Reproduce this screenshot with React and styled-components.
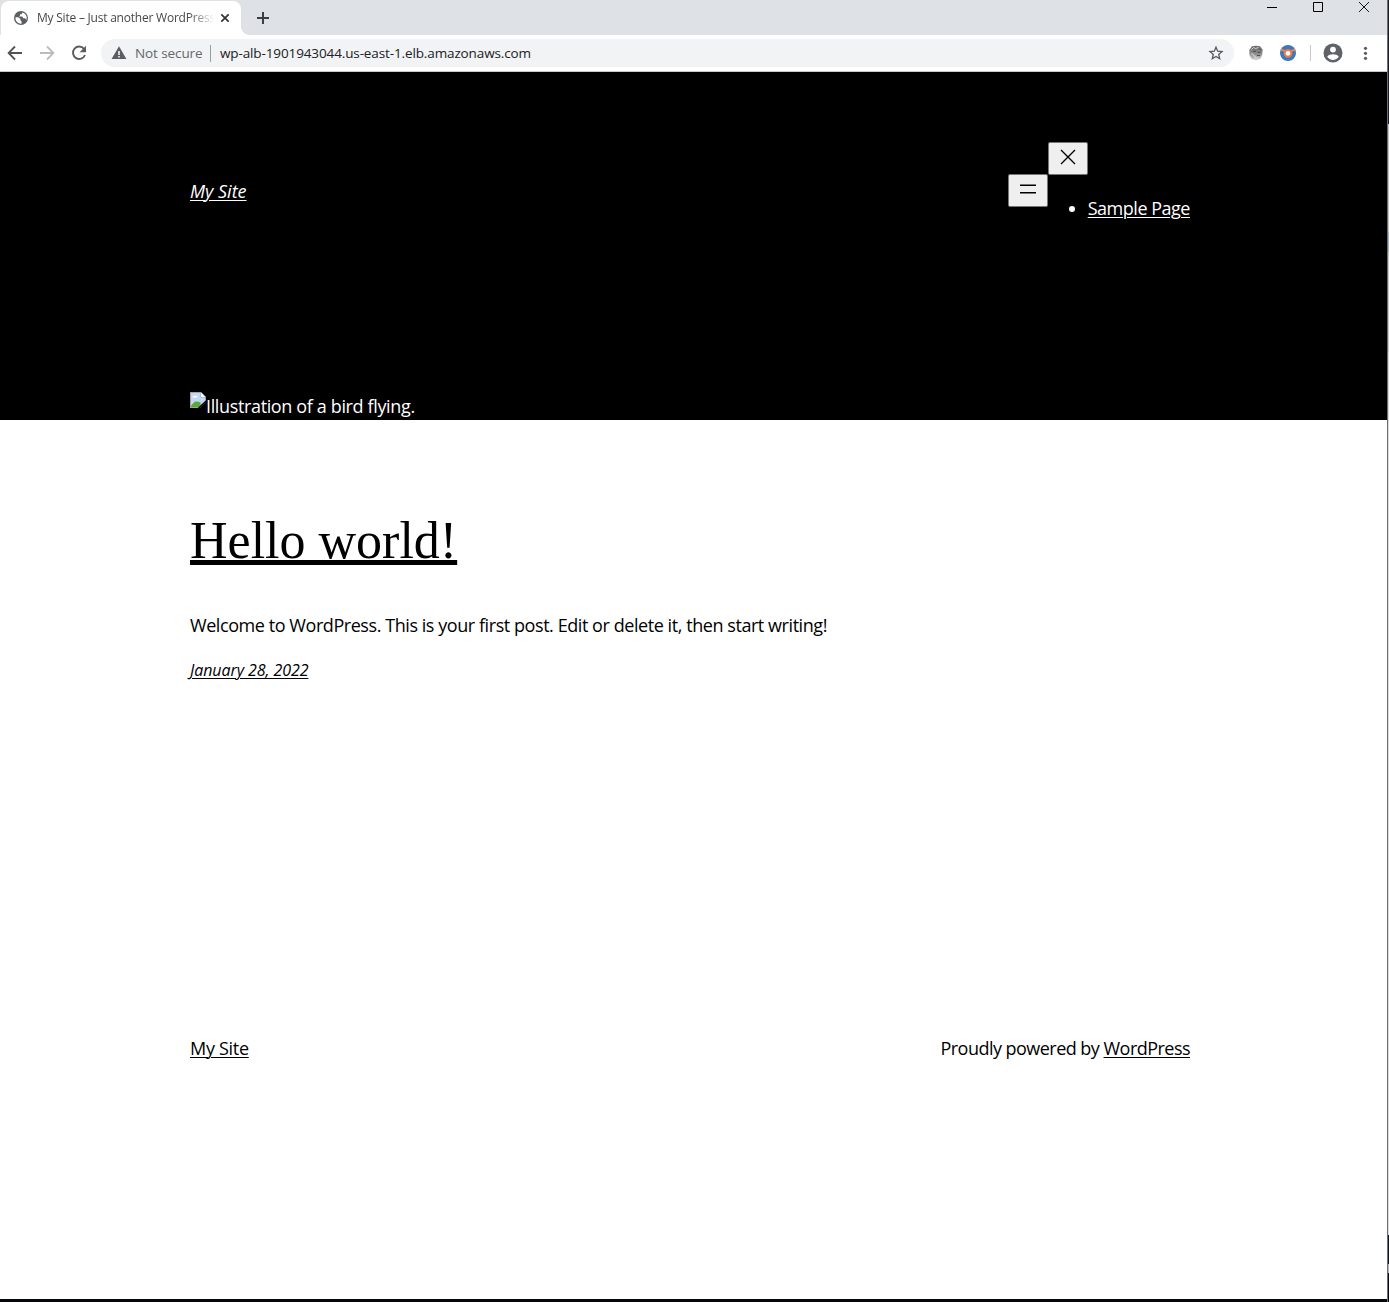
import React from 'react';
import styled, { createGlobalStyle } from 'styled-components';

const GlobalStyle = createGlobalStyle`
  * { box-sizing: border-box; }
  body { margin: 0; background: #06070d; }
  a { color: inherit; text-decoration-thickness: 1px; text-underline-offset: 2px; }
  svg { display: block; flex: none; }
`;

const Desktop = styled.div`
  display: flex;
  width: 1389px;
  height: 1302px;
  overflow: hidden;
  font-family: 'Open Sans', 'Noto Sans', sans-serif;
  background: #06070d;
`;
const Window = styled.div`
  display: flex;
  flex-direction: column;
  width: 1387px;
  height: 1299px;
  background: #fff;
`;
const Edge = styled.div`
  width: 2px;
  height: 1302px;
  border-left: 1px solid #6c6e70;
  display: flex;
  flex-direction: column;
`;
const EdgePart = styled.div`
  height: ${(p) => p.$h}px;
  background: ${(p) => p.$c};
`;
const TabStrip = styled.div`
  display: flex;
  height: 35px;
  background: #dee1e6;
  padding-left: 1px;
`;
const Tab = styled.div`
  display: flex;
  align-items: center;
  width: 240px;
  height: 34px;
  margin-top: 1px;
  padding: 0 10px 0 12px;
  border-radius: 8px 8px 0 0;
  background: #fff;
`;
const TabTitle = styled.div`
  width: 176px;
  margin-left: 8px;
  font-size: 12px;
  line-height: 16px;
  letter-spacing: -0.22px;
  color: #45484c;
  white-space: nowrap;
  overflow: hidden;
  mask-image: linear-gradient(90deg, #000 152px, transparent 178px);
`;
const TabFoot = styled.div`
  align-self: flex-end;
  width: 8px;
  height: 8px;
  background: radial-gradient(circle at 100% 0, #dee1e6 7.5px, #fff 8px);
`;
const NewTab = styled.div`
  padding: 11px 0 0 7px;
`;
const WindowControls = styled.div`
  display: flex;
  gap: 34px;
  margin-left: auto;
  padding: 1px 17px 0 0;
`;
const Toolbar = styled.div`
  display: flex;
  align-items: center;
  height: 37px;
  padding: 0 14px 0 7px;
  border-bottom: 1px solid #c8c9cb;
`;
const NavIcons = styled.div`
  display: flex;
  gap: 16px;
`;
const Omnibox = styled.div`
  display: flex;
  align-items: center;
  width: 1133px;
  height: 28px;
  margin-left: 14px;
  padding: 0 10px;
  border-radius: 14px;
  background: #f1f3f4;
`;
const Security = styled.div`
  width: 76px;
  margin-left: 8px;
  border-right: 1px solid #9a9da1;
  font-size: 13.5px;
  line-height: 17px;
  letter-spacing: -0.1px;
  white-space: nowrap;
  color: #64686d;
`;
const Url = styled.div`
  flex: 1;
  margin-left: 9px;
  font-size: 13.5px;
  line-height: 17px;
  letter-spacing: -0.12px;
  white-space: nowrap;
  color: #202124;
`;
const Actions = styled.div`
  display: flex;
  align-items: center;
  gap: 16px;
  margin-left: 14px;
`;
const Account = styled.div`
  display: flex;
  align-items: center;
  gap: 14px;
  margin-left: -2px;
`;
const Divider = styled.div`
  width: 1px;
  height: 16px;
  margin-right: -2px;
  background: #c5c7ca;
`;

const Header = styled.header`
  height: 348px;
  padding: 70px 197px 0 190px;
  background: #000;
  color: #fff;
`;
const HeaderRow = styled.div`
  display: flex;
  align-items: center;
  justify-content: space-between;
  height: 98px;
`;
const Body = styled.div`
  font-size: ${(p) => p.$size || 18}px;
  line-height: 28px;
  letter-spacing: ${(p) => p.$track || 0}px;
  font-style: ${(p) => (p.$italic ? 'italic' : 'normal')};
  white-space: nowrap;
`;
const Nav = styled.nav`
  display: flex;
  align-items: flex-start;
  height: 98px;
`;
const NavButton = styled.button`
  display: flex;
  justify-content: center;
  width: 40px;
  height: 33px;
  margin-top: ${(p) => p.$top || 0}px;
  padding: 2px 0 0;
  border: 1px solid #767676;
  border-radius: 2px;
  background: #efefef;
  color: #000;
`;
const Menu = styled.div`
  display: flex;
  flex-direction: column;
  height: 98px;
`;
const MenuList = styled.ul`
  margin: 19px 0 0;
  padding: 0 0 0 40px;
`;
const BrokenImage = styled.div`
  display: flex;
  height: 28px;
  margin-top: 152px;
`;
const Main = styled.main`
  height: 879px;
  padding: 86px 197px 0 190px;
  color: #000;
`;
const Title = styled.h2`
  margin: 0;
  font: 400 52px/70px 'Liberation Serif', serif;
  letter-spacing: 0;
  white-space: nowrap;
  a { text-decoration-thickness: 5px; text-underline-offset: 2px; }
`;
const Post = styled.div`
  display: flex;
  flex-direction: column;
  gap: 17px;
  margin-top: 35px;
`;
const Footer = styled.footer`
  display: flex;
  justify-content: space-between;
  margin-top: 350px;
`;

const Globe = () => (
  <svg width="16" height="16" viewBox="0 0 16 16">
    <circle cx="8" cy="8" r="7" fill="#5b5f64" />
    <path d="M2.4 7.3h2.8l2.2 1.4v1.6l1.2 1.2v2.1A5.7 5.7 0 0 1 2.4 7.3zM9.5 2.5 8.6 4.2H7v1.5L5.7 6.6h3.5l1.1 1.7h1.6l1.7 1.5A5.8 5.8 0 0 0 9.5 2.5z" fill="#fff" />
  </svg>
);
const CloseMark = styled.svg`
  margin-left: 7px;
`;
const TabClose = () => (
  <CloseMark width="10" height="10" viewBox="0 0 10 10" stroke="#303337" strokeWidth="1.7">
    <path d="M1.3 1.3l7.4 7.4M8.7 1.3L1.3 8.7" />
  </CloseMark>
);
const Back = ({ flip, color }) => (
  <svg width="16" height="16" viewBox="0 0 16 16" fill="none" stroke={color} strokeWidth="1.8">
    <path d={flip ? 'M1 8h13M8 1.5L14.4 8 8 14.5' : 'M15 8H2M8 1.5L1.6 8 8 14.5'} />
  </svg>
);
const Reload = () => (
  <svg width="16" height="16" viewBox="0 0 16 16">
    <path d="M13 3.8A6.2 6.2 0 1 0 14 10" fill="none" stroke="#5a5d61" strokeWidth="1.9" />
    <path d="M15 .8v6.4H8.6z" fill="#5a5d61" />
  </svg>
);
const Warning = () => (
  <svg width="16" height="16" viewBox="0 0 16 16">
    <path d="M8 1.3 15.4 14H.6z" fill="#5a5d61" />
    <path d="M8 6v4M8 11v1.6" stroke="#f1f3f4" strokeWidth="1.6" />
  </svg>
);
const Star = () => (
  <svg width="16" height="16" viewBox="0 0 16 16" fill="none" stroke="#55585c" strokeWidth="1.3">
    <path d="M8 2.2l1.7 4 4.300.400-3.300 2.900 1 4.200L8 11.400l-3.700 2.300 1-4.200L2 6.600l4.300-.400z" />
  </svg>
);
const GreyGlobe = () => (
  <svg width="16" height="16" viewBox="0 0 16 16">
    <defs>
      <linearGradient id="grey" x1="0" y1="0" x2="0" y2="1">
        <stop offset="0" stopColor="#6a6a6a" />
        <stop offset=".55" stopColor="#8b8b8b" />
        <stop offset="1" stopColor="#d6d6d6" />
      </linearGradient>
    </defs>
    <path d="M4 1.200 8 .700l4 .600 2.600 3.200-.400 5-1.700 4.300-4 1.400-5-1.300-2-4-.200-5z" fill="url(#grey)" />
    <path d="M3.500 4.500l2-2 2 1 3-1M3 9h2l1 2 2 .5M6 13h5" fill="none" stroke="#d0d0d0" />
    <path d="M5 6.300h3M9.500 7.400h3M11 3.500l2 2M9 10.500h3" stroke="#4c4c4c" />
  </svg>
);
const BlueBadge = () => (
  <svg width="16" height="16" viewBox="0 0 16 16">
    <circle cx="8" cy="8" r="8" fill="#3b78bd" />
    <path d="M.7 4.800l5 1.300M15.300 4.800l-5 1.300" stroke="#ef8350" strokeWidth="2" />
    <circle cx="8" cy="8.300" r="3.400" fill="#fff" stroke="#ef7b43" strokeWidth="2" />
  </svg>
);
const Profile = () => (
  <svg width="20" height="20" viewBox="0 0 20 20">
    <circle cx="10" cy="10" r="9.500" fill="#5f6368" />
    <circle cx="10" cy="6.600" r="2.900" fill="#fff" />
    <path d="M4.200 13.800c1.100-1.800 3.700-2.500 5.800-2.500s4.700.700 5.800 2.500C14.500 15.800 12.400 16.900 10 16.900s-4.500-1.100-5.800-3.100z" fill="#fff" />
  </svg>
);
const Dots = () => (
  <svg width="16" height="16" viewBox="0 0 16 16" fill="#5a5d61">
    <circle cx="8.500" cy="3.300" r="1.600" />
    <circle cx="8.500" cy="8.300" r="1.600" />
    <circle cx="8.500" cy="13.300" r="1.600" />
  </svg>
);
const Broken = () => (
  <svg width="16" height="16" viewBox="0 0 16 16">
    <path d="M0 0h11l5 5v5.500L10 16H0z" fill="#a4a4a4" />
    <path d="M1 1h9.500v4.500H15V10l-5.500 5H1z" fill="#c3d6f5" />
    <path d="M11 .500v4.500h4.500z" fill="#fff" />
    <path d="M2.500 5.500c0-1.500 1.300-2 2-1.400.900-1.300 3-.600 2.800 1.400z" fill="#fff" />
    <path d="M1 15v-1.500l4-4 4 .300 2 1.200L9 15z" fill="#56ab35" />
    <path d="M16 8.300 8.300 15.300V16H10l6-5.500z" fill="#000" />
  </svg>
);

export default function App() {
  return (
    <Desktop>
      <GlobalStyle />
      <Window>
        <TabStrip>
          <Tab>
            <Globe />
            <TabTitle>My Site – Just another WordPress</TabTitle>
            <TabClose />
          </Tab>
          <TabFoot />
          <NewTab>
            <svg width="14" height="14" viewBox="0 0 14 14" stroke="#3b3e42" strokeWidth="2"><path d="M7 1v12M1 7h12" /></svg>
          </NewTab>
          <WindowControls>
            <svg width="12" height="12" viewBox="0 0 12 12" stroke="#000"><path d="M1 6.500h10" /></svg>
            <svg width="12" height="12" viewBox="0 0 12 12" fill="none" stroke="#000"><path d="M1.500 1.500h9v9h-9z" /></svg>
            <svg width="12" height="12" viewBox="0 0 12 12" stroke="#000" strokeWidth="0.900"><path d="M1 1l10 10M11 1L1 11" /></svg>
          </WindowControls>
        </TabStrip>
        <Toolbar>
          <NavIcons>
            <Back color="#505357" />
            <Back flip color="#b9bbbe" />
            <Reload />
          </NavIcons>
          <Omnibox>
            <Warning />
            <Security>Not secure</Security>
            <Url>wp-alb-1901943044.us-east-1.elb.amazonaws.com</Url>
            <Star />
          </Omnibox>
          <Actions>
            <GreyGlobe />
            <BlueBadge />
            <Account>
              <Divider />
              <Profile />
              <Dots />
            </Account>
          </Actions>
        </Toolbar>

        <Header>
          <HeaderRow>
            <Body $italic><a href="#home">My Site</a></Body>
            <Nav>
              <NavButton $top={32} aria-label="Open menu">
                <svg width="24" height="24" viewBox="0 0 24 24" stroke="#000" strokeWidth="1.500"><path d="M4 8.250h16M4 15.750h16" /></svg>
              </NavButton>
              <Menu>
                <NavButton aria-label="Close menu">
                  <svg width="24" height="24" viewBox="0 0 24 24" stroke="#000" strokeWidth="1.400"><path d="M5 5l14 14M19 5L5 19" /></svg>
                </NavButton>
                <MenuList>
                  <Body as="li" $track={-0.480}><a href="#sample">Sample Page</a></Body>
                </MenuList>
              </Menu>
            </Nav>
          </HeaderRow>
          <BrokenImage>
            <Broken />
            <Body $track={-0.360}>Illustration of a bird flying.</Body>
          </BrokenImage>
        </Header>

        <Main>
          <Title><a href="#hello">Hello world!</a></Title>
          <Post>
            <Body $track={-0.435}>Welcome to WordPress. This is your first post. Edit or delete it, then start writing!</Body>
            <Body $italic $size={16} $track={-0.080}><a href="#date">January 28, 2022</a></Body>
          </Post>
          <Footer>
            <Body $track={-0.300}><a href="#home">My Site</a></Body>
            <Body $track={-0.530}>Proudly powered by <a href="#wp">WordPress</a></Body>
          </Footer>
        </Main>
      </Window>
      <Edge>
        <EdgePart $h={124} $c="#1b1d22" />
        <EdgePart $h={108} $c="#c4c4c2" />
        <EdgePart $h={20} $c="#a9b4bb" />
        <EdgePart $h={100} $c="#c9c9c7" />
        <EdgePart $h={883} $c="#dadada" />
        <EdgePart $h={29} $c="#10161e" />
        <EdgePart $h={9} $c="#b5b5b5" />
        <EdgePart $h={29} $c="#06070d" />
      </Edge>
    </Desktop>
  );
}
